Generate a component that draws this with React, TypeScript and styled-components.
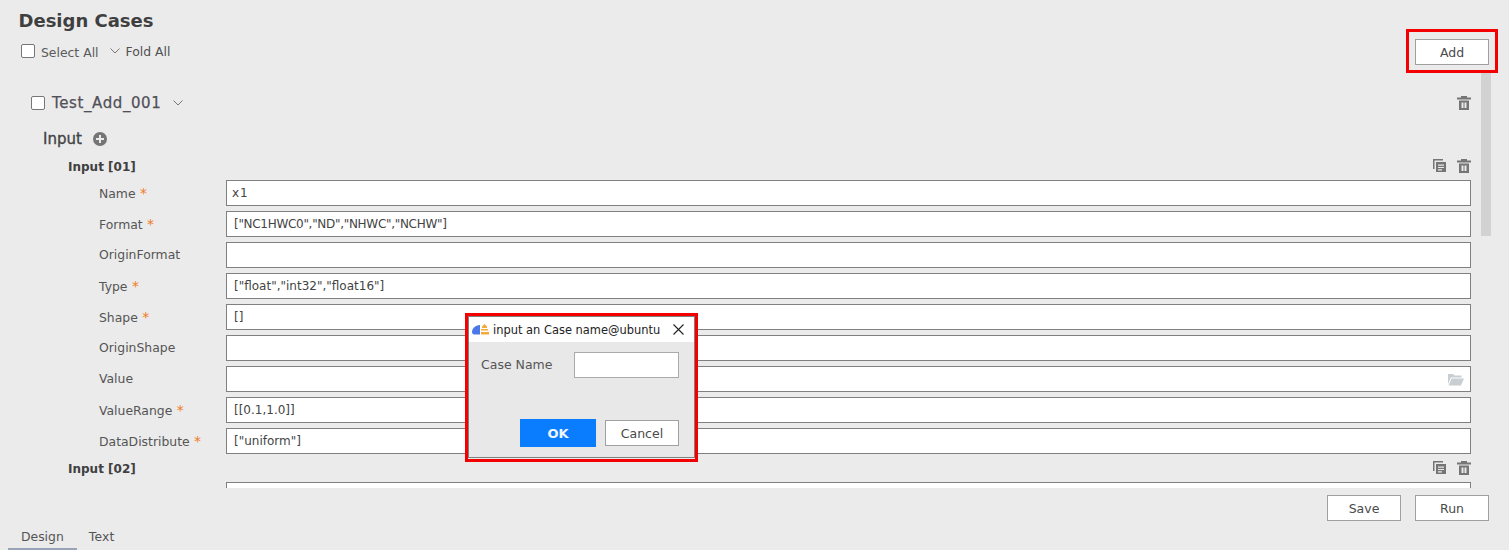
import React from "react";
import styled, { createGlobalStyle } from "styled-components";

const Global = createGlobalStyle`
  html, body { margin: 0; padding: 0; background: #ebebeb; overflow: hidden; }
  * { box-sizing: border-box; }
  body { font-family: "DejaVu Sans", "Liberation Sans", sans-serif; color: #4a4a4a; }
`;

const Page = styled.div`
  position: relative;
  width: 1509px;
  height: 550px;
  display: flex;
  flex-direction: column;
  overflow: hidden;
`;
const Header = styled.header`
  height: 73px;
  flex: none;
  padding: 10px 20px 0 19px;
  display: flex;
  justify-content: space-between;
`;
const TitleBlock = styled.div`
  display: flex;
  flex-direction: column;
`;
const Title = styled.h1`
  margin: 0 0 0 -0.5px;
  height: 21px;
  font-size: 18px;
  line-height: 21px;
  font-weight: 700;
  color: #3f3f3f;
`;
const ToolRow = styled.div`
  display: flex;
  align-items: center;
  margin-top: 11px;
  padding-left: 2px;
  height: 18px;
  font-size: 12.4px;
`;
const Check = styled.span<{ $mr: number }>`
  width: 14px;
  height: 14px;
  flex: none;
  margin-right: ${(p) => p.$mr}px;
  background: #fff;
  border: 1px solid #767676;
  border-radius: 2px;
`;
const SelectLabel = styled.span`
  color: #5a5a5a;
  margin-right: 11px;
  position: relative;
  top: 1px;
`;
const FoldLabel = styled.span`
  color: #505050;
  margin-left: 6px;
`;
const Btn = styled.button`
  width: 74px;
  height: 26px;
  padding: 0;
  background: #fff;
  border: 1px solid #a0a0a0;
  border-radius: 0;
  font-family: inherit;
  font-size: 12.5px;
  color: #4a4a4a;
`;
const AddWrap = styled.div`
  padding-top: 29px;
`;
const Body = styled.div`
  height: 415px;
  flex: none;
  overflow: hidden;
  position: relative;
  padding: 0 38px 0 31px;
`;
const Scroll = styled.div`
  position: absolute;
  left: 1481px;
  top: 0;
  width: 10px;
  height: 163px;
  background: #d2d2d2;
`;
const CaseRow = styled.div`
  height: 56px;
  padding-top: 4px;
  display: flex;
  align-items: center;
  color: #505058;
`;
const CaseName = styled.span`
  font-size: 15px;
  letter-spacing: 0.6px;
  margin: 0 12px 0 1px;
  -webkit-text-stroke: 0.25px #505058;
`;
const Grow = styled.div`
  flex: 1;
`;
const SectionRow = styled.div`
  display: flex;
  align-items: center;
  gap: 11px;
  height: 20px;
  margin-left: 12px;
  font-size: 15px;
  color: #444;
  -webkit-text-stroke: 0.35px #444;
`;
const GroupRow = styled.div<{ $top: number }>`
  display: flex;
  align-items: center;
  height: 18px;
  margin: ${(p) => p.$top}px 0 5px 37px;
  font-size: 12px;
  font-weight: 700;
  color: #404040;
`;
const GroupName = styled.span`
  position: relative;
  top: 1px;
`;
const Icons = styled.div`
  display: flex;
  gap: 11px;
  margin-left: auto;
`;
const Field = styled.div`
  display: flex;
  align-items: center;
  height: 26px;
  margin-bottom: 5px;
  padding-left: 68px;
`;
const Label = styled.label<{ $plain?: boolean }>`
  width: 127px;
  flex: none;
  font-size: 12.4px;
  color: #555;
  padding-bottom: ${(p) => (p.$plain ? 2 : 0)}px;
`;
const Star = styled.span`
  color: #f27a24;
  font-size: 14px;
`;
const Box = styled.div`
  flex: 1;
  height: 26px;
  background: #fff;
  border: 1px solid #808080;
  padding: 0 6px 0 7px;
  display: flex;
  align-items: center;
  font-size: 12px;
  color: #444;
`;
const Value = styled.span<{ $track?: number; $shift?: number }>`
  letter-spacing: ${(p) => p.$track ?? 0}px;
  margin-left: ${(p) => p.$shift ?? 0}px;
  white-space: pre;
`;
const FolderSlot = styled.span`
  margin-left: auto;
  display: flex;
`;
const Footer = styled.div`
  flex: none;
  height: 33px;
  padding: 7px 20px 0 0;
  display: flex;
  justify-content: flex-end;
  gap: 14px;
`;
const Tabs = styled.div`
  flex: 1;
  display: flex;
  align-items: flex-end;
  padding-left: 8px;
`;
const Tab = styled.div<{ $on?: boolean }>`
  height: 29px;
  padding: 8px 13px 0;
  font-size: 12.4px;
  line-height: 15px;
  color: #555;
  border-bottom: 2px solid ${(p) => (p.$on ? "#9aa4b8" : "transparent")};
  &:last-child { padding-left: 12px; letter-spacing: 0.2px; }
`;
const Highlight = styled.div`
  position: absolute;
  left: 1406px;
  top: 29px;
  width: 92px;
  height: 44px;
  border: 3px solid #f50000;
  pointer-events: none;
`;
const DialogFrame = styled.div`
  position: absolute;
  left: 465px;
  top: 313px;
  width: 233px;
  height: 149px;
  border: 3px solid #f50000;
  padding-bottom: 1px;
  background: #ebebeb;
`;
const Dialog = styled.div`
  height: 100%;
  border: 1px solid #808080;
  background: #e8e8e8;
  display: flex;
  flex-direction: column;
`;
const DialogTitle = styled.div`
  height: 25px;
  background: #fff;
  display: flex;
  align-items: center;
  padding: 0 10px 0 3px;
  font-size: 11.45px;
  color: #222;
  gap: 4px;
`;
const DialogBody = styled.div`
  flex: 1;
  padding: 10px 15px 0 12px;
  display: flex;
  flex-direction: column;
`;
const DialogField = styled.div`
  display: flex;
  align-items: center;
  justify-content: space-between;
  font-size: 12.5px;
  color: #555;
`;
const DialogLabel = styled.span`
  position: relative;
  top: -1px;
`;
const DialogInput = styled.div`
  width: 105px;
  height: 26px;
  background: #fff;
  border: 1px solid #aaa;
`;
const DialogActions = styled.div`
  display: flex;
  align-items: center;
  justify-content: flex-end;
  margin-top: 41px;
  gap: 9px;
`;
const OkBtn = styled.button`
  width: 76px;
  height: 28px;
  padding: 0;
  background: #0a7dff;
  border: 0;
  color: #f0f6ff;
  font-family: inherit;
  font-size: 13px;
  font-weight: 700;
`;
const CloseSlot = styled.span`
  margin-left: auto;
  display: flex;
`;

const Trash = () => (
  <svg width="14" height="14" viewBox="0 0 14 14" fill="#757575">
    <rect x="0" y="1.500" width="14" height="2" />
    <rect x="4" y="0" width="6" height="2" />
    <path d="M2 4.500h10V14H2zM4.500 6.500v5.500h2V6.500zM7.500 6.500v5.500h2V6.500z" fillRule="evenodd" />
  </svg>
);
const Copy = () => (
  <svg width="13" height="13" viewBox="0 0 13 13" fill="#757575">
    <path d="M0 0h10v1.500H1.500V10H0z" />
    <path d="M3 3h10v10H3zM5 5.500v1.200h6V5.500zM5 7.900v1.200h6V7.900zM5 10.300v1.200h4v-1.200z" fillRule="evenodd" />
  </svg>
);
const Plus = () => (
  <svg width="14" height="14" viewBox="0 0 14 14">
    <circle cx="7" cy="7" r="7" fill="#757575" stroke="none" />
    <path d="M3 6h8v2H3zM6 3h2v8H6z" fill="#ebebeb" stroke="none" />
  </svg>
);
const Chevron = () => (
  <svg width="10" height="6" viewBox="0 0 10 6" fill="none" stroke="#777" strokeWidth="1">
    <path d="M0.500 0.500L5 5l4.500-4.500" />
  </svg>
);
const Folder = () => (
  <svg width="16" height="13" viewBox="0 0 16 13" fill="#c8ced2">
    <path d="M0 1h5l1.500 1.500h7V4.500H3L0 11z" />
    <path d="M3.500 5.500H16L13 12.500H0.500z" />
  </svg>
);
const Cloud = () => (
  <svg width="17" height="11" viewBox="0 0 17 11">
    <path d="M0 8C0 4 4 1 8 1v9.500H2C1 10.500 0 9.500 0 8z" fill="#4a78e8" />
    <path d="M10 2.500L12.500 0 15 2.500v1.500h-5zM9 5h7v1.500H9zM9 8h8v2.500H9z" fill="#f5a83c" />
  </svg>
);
const Close = () => (
  <svg width="11" height="11" viewBox="0 0 11 11" stroke="#222" strokeWidth="1.100" fill="none">
    <path d="M0.500 0.500l10 10M10.500 0.500l-10 10" />
  </svg>
);

const fields: { name: string; r?: boolean; v?: string; folder?: boolean; track?: number; shift?: number }[] = [
  { name: "Name", r: true, v: "x1", track: 1, shift: -2 },
  { name: "Format", r: true, v: '["NC1HWC0","ND","NHWC","NCHW"]', track: -0.3 },
  { name: "OriginFormat" },
  { name: "Type", r: true, v: '["float","int32","float16"]' },
  { name: "Shape", r: true, v: "[]" },
  { name: "OriginShape" },
  { name: "Value", folder: true },
  { name: "ValueRange", r: true, v: "[[0.1,1.0]]" },
  { name: "DataDistribute", r: true, v: '["uniform"]' },
];

export default function App() {
  return (
    <Page>
      <Global />
      <Header>
        <TitleBlock>
          <Title>Design Cases</Title>
          <ToolRow>
            <Check $mr={6} />
            <SelectLabel>Select All</SelectLabel>
            <Chevron />
            <FoldLabel>Fold All</FoldLabel>
          </ToolRow>
        </TitleBlock>
        <AddWrap>
          <Btn>Add</Btn>
        </AddWrap>
      </Header>
      <Body>
        <Scroll />
        <CaseRow>
          <Check $mr={6} />
          <CaseName>Test_Add_001</CaseName>
          <Chevron />
          <Grow />
          <Icons>
            <Trash />
          </Icons>
        </CaseRow>
        <SectionRow>
          Input <Plus />
        </SectionRow>
        <GroupRow $top={8}>
          <GroupName>Input [01]</GroupName>
          <Icons>
            <Copy />
            <Trash />
          </Icons>
        </GroupRow>
        {fields.map((f) => (
          <Field key={f.name}>
            <Label $plain={!f.r}>
              {f.name}
              {f.r && <Star> *</Star>}
            </Label>
            <Box>
              {f.v && (
                <Value $track={f.track} $shift={f.shift}>
                  {f.v}
                </Value>
              )}
              {f.folder && (
                <FolderSlot>
                  <Folder />
                </FolderSlot>
              )}
            </Box>
          </Field>
        ))}
        <GroupRow $top={2}>
          <GroupName>Input [02]</GroupName>
          <Icons>
            <Copy />
            <Trash />
          </Icons>
        </GroupRow>
        <Field>
          <Label />
          <Box />
        </Field>
      </Body>
      <Footer>
        <Btn>Save</Btn>
        <Btn>Run</Btn>
      </Footer>
      <Tabs>
        <Tab $on>Design</Tab>
        <Tab>Text</Tab>
      </Tabs>
      <Highlight />
      <DialogFrame>
        <Dialog>
          <DialogTitle>
            <Cloud />
            input an Case name@ubuntu
            <CloseSlot>
              <Close />
            </CloseSlot>
          </DialogTitle>
          <DialogBody>
            <DialogField>
              <DialogLabel>Case Name</DialogLabel>
              <DialogInput />
            </DialogField>
            <DialogActions>
              <OkBtn>OK</OkBtn>
              <Btn>Cancel</Btn>
            </DialogActions>
          </DialogBody>
        </Dialog>
      </DialogFrame>
    </Page>
  );
}
